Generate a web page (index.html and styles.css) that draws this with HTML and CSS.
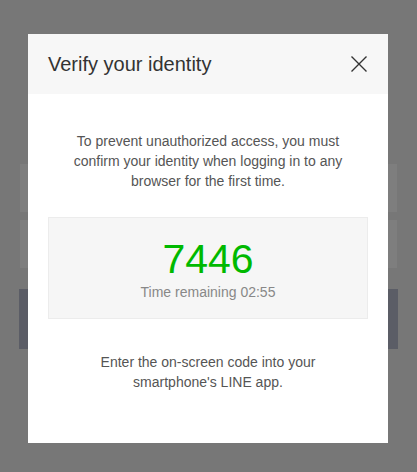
FILE: index.html
```html
<!DOCTYPE html>
<html lang="en">
<head>
<meta charset="utf-8">
<title>Verify your identity</title>
<link rel="stylesheet" href="styles.css">
</head>
<body>
<div class="page">
  <div class="field"></div>
  <div class="field"></div>
  <div class="button"></div>
</div>
<div class="modal" role="dialog">
  <div class="modal-head">
    <h1 class="modal-title">Verify your identity</h1>
    <button class="close" aria-label="Close">
      <svg width="16" height="16" viewBox="0 0 16 16"><path d="M0.5 0.5L15.5 15.5M15.5 0.5L0.5 15.5" stroke="#333" stroke-width="1.4" fill="none"/></svg>
    </button>
  </div>
  <div class="modal-body">
    <p class="desc">To prevent unauthorized access, you must confirm your identity when logging in to any browser for the first time.</p>
    <div class="code-box">
      <div class="code">7446</div>
      <div class="timer">Time remaining 02:55</div>
    </div>
    <p class="desc hint">Enter the on-screen code into your smartphone's LINE app.</p>
  </div>
</div>
</body>
</html>
```
FILE: styles.css
```css
html, body {
  margin: 0;
  padding: 0;
  height: 100%;
}
body {
  background: #777777;
  font-family: "Liberation Sans", Arial, sans-serif;
  position: relative;
  overflow: hidden;
}
.page {
  padding: 164px 20px 0 20px;
  display: flex;
  flex-direction: column;
  gap: 8px;
}
.field {
  height: 48px;
  background: #7e7e7e;
}
.button {
  height: 60px;
  margin: 13px -1px 0 -1px;
  background: #5b5d66;
}
.modal {
  position: absolute;
  top: 34px;
  left: 28px;
  width: 360px;
  height: 409px;
  background: #ffffff;
}
.modal-head {
  height: 60px;
  background: #f7f7f7;
  display: flex;
  align-items: center;
  justify-content: space-between;
  padding: 0 21px 0 20px;
}
.modal-title {
  margin: 0;
  font-size: 20px;
  font-weight: normal;
  color: #333333;
  line-height: 24px;
}
.close {
  border: 0;
  background: none;
  padding: 0;
  width: 16px;
  height: 16px;
  display: flex;
}
.modal-body {
  padding: 37px 20px 0 20px;
}
.desc {
  margin: 0;
  font-size: 14px;
  line-height: 20px;
  color: #555555;
  text-align: center;
  padding: 0 20px;
}
.code-box {
  margin-top: 26px;
  background: #f6f6f6;
  border: 1px solid #ececec;
  padding: 18px 0 16px 0;
  text-align: center;
}
.code {
  font-size: 41px;
  line-height: 46px;
  color: #00b900;
}
.timer {
  font-size: 14px;
  line-height: 20px;
  color: #888888;
}
.hint {
  margin-top: 33px;
  padding: 0 40px;
}
```
